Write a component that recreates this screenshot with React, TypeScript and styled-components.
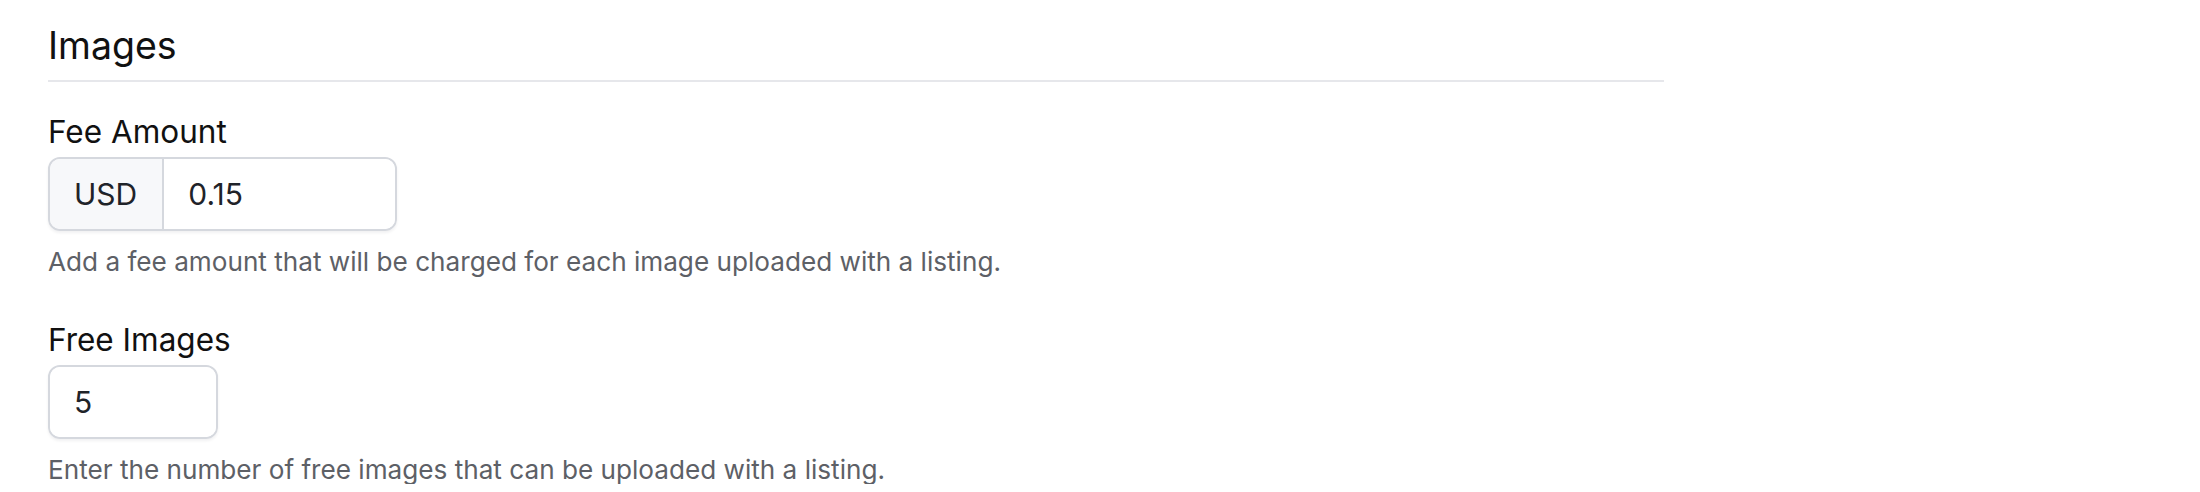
import React from "react";
import styled, { createGlobalStyle } from "styled-components";

const GlobalStyle = createGlobalStyle`
    body {
        margin: 0;
        background: #ffffff;
        font-family: Inter, "Liberation Sans", sans-serif;
    }
`;

const Page = styled.div`
    padding: 24px 0 0 48px;
`;

const Section = styled.section`
    width: 1616px;
`;

const SectionTitle = styled.h2`
    margin: 0;
    padding-bottom: 13px;
    border-bottom: 2px solid #e6e7eb;
    font-size: 37.5px;
    font-weight: 400;
    line-height: 43px;
    color: #111;
`;

const Field = styled.div<{ $gap: number }>`
    margin-top: ${props => props.$gap}px;
    display: flex;
    flex-direction: column;
    align-items: flex-start;
`;

const Label = styled.label`
    font-size: 31.5px;
    line-height: 36px;
    color: #111;
    margin-bottom: 7px;
`;

const InputGroup = styled.div<{ $width: number }>`
    display: flex;
    width: ${props => props.$width}px;
    height: 74px;
    box-sizing: border-box;
    border: 2px solid #d5d8de;
    border-radius: 12px;
    overflow: hidden;
    box-shadow: 0 2px 3px rgba(16, 24, 40, 0.06);
`;

const Addon = styled.span`
    display: flex;
    align-items: center;
    padding: 0 25px 0 24px;
    background: #f7f8fa;
    border-right: 2px solid #d5d8de;
    font-size: 30px;
    color: #1f2329;
`;

const Input = styled.input`
    flex: 1;
    min-width: 0;
    border: none;
    outline: none;
    padding: 0 24px;
    font-family: inherit;
    font-size: 30px;
    color: #1f2329;
    background: #fff;
`;

const Help = styled.p`
    margin: 16px 0 0;
    font-size: 26.15px;
    line-height: 29px;
    color: #5d6066;
`;

export default function App() {
    return (
        <>
            <GlobalStyle />
            <Page>
                <Section>
                    <SectionTitle>Images</SectionTitle>
                    <Field $gap={32}>
                        <Label>Fee Amount</Label>
                        <InputGroup $width={349}>
                            <Addon>USD</Addon>
                            <Input type="text" defaultValue="0.15" />
                        </InputGroup>
                        <Help>Add a fee amount that will be charged for each image uploaded with a listing.</Help>
                    </Field>
                    <Field $gap={46}>
                        <Label>Free Images</Label>
                        <InputGroup $width={170}>
                            <Input type="text" defaultValue="5" />
                        </InputGroup>
                        <Help>Enter the number of free images that can be uploaded with a listing.</Help>
                    </Field>
                </Section>
            </Page>
        </>
    );
}
